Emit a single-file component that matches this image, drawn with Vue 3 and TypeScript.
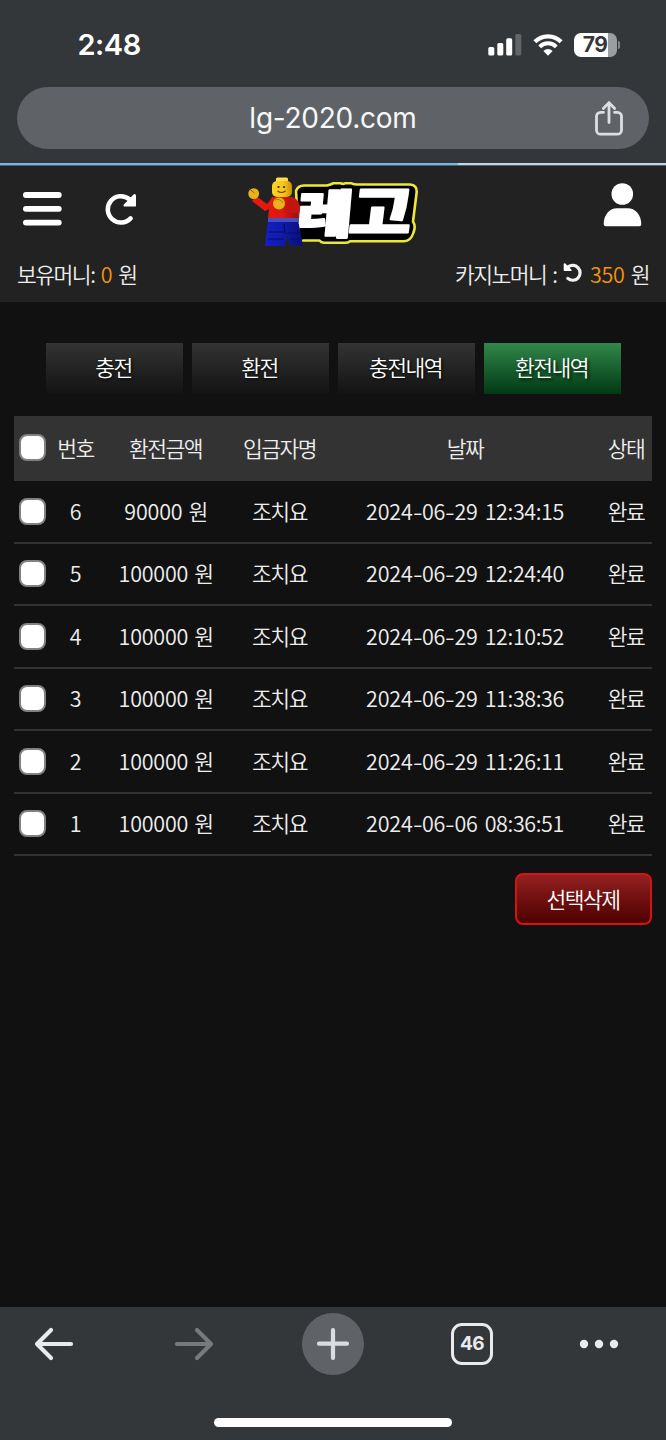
<script setup lang="ts">
import { ref, computed } from 'vue'

interface Withdrawal {
  id: number
  amount: string
  name: string
  date: string
  time: string
  status: string
}

const tabs: string[] = ['충전', '환전', '충전내역', '환전내역']
const activeTab = ref<number>(3)

const rows: Withdrawal[] = [
  { id: 6, amount: '90000', name: '조치요', date: '2024-06-29', time: '12:34:15', status: '완료' },
  { id: 5, amount: '100000', name: '조치요', date: '2024-06-29', time: '12:24:40', status: '완료' },
  { id: 4, amount: '100000', name: '조치요', date: '2024-06-29', time: '12:10:52', status: '완료' },
  { id: 3, amount: '100000', name: '조치요', date: '2024-06-29', time: '11:38:36', status: '완료' },
  { id: 2, amount: '100000', name: '조치요', date: '2024-06-29', time: '11:26:11', status: '완료' },
  { id: 1, amount: '100000', name: '조치요', date: '2024-06-06', time: '08:36:51', status: '완료' },
]

const dateParts = (date: string): string[] => date.split(/(-)/)

const selected = ref<number[]>([])
const allSelected = computed<boolean>({
  get: () => selected.value.length === rows.length,
  set: (on) => {
    selected.value = on ? rows.map((r) => r.id) : []
  },
})
</script>

<template>
  <div class="screen">
    <header class="chrome-top">
      <div class="status">
        <span class="time">2:48</span>
        <div class="indicators">
          <svg class="signal" width="34" height="22" viewBox="0 0 34 22">
            <rect x="0.3" y="13" width="6" height="8.5" rx="1.6" fill="#fff" />
            <rect x="9.3" y="9" width="6" height="12.5" rx="1.6" fill="#fff" />
            <rect x="18.2" y="4.3" width="6" height="17.2" rx="1.6" fill="#fff" />
            <rect x="27.3" y="0" width="6" height="21.5" rx="1.6" fill="#626466" />
          </svg>
          <svg class="wifi" width="30" height="22" viewBox="0 0 30 22">
            <path d="M1.9 7.7a18.6 18.6 0 0 1 26.2 0" fill="none" stroke="#fff" stroke-width="4.3" />
            <path d="M6.7 12.8a11.7 11.7 0 0 1 16.6 0" fill="none" stroke="#fff" stroke-width="4" />
            <path d="M10.4 17a6.4 6.4 0 0 1 9.2 0L15 21.7z" fill="#fff" />
          </svg>
          <div class="battery"><span>79</span></div>
          <i class="battery-tip"></i>
        </div>
      </div>
      <div class="address">
        <span class="url">lg-2020.com</span>
        <svg class="share" width="30" height="36" viewBox="0 0 30 36" fill="none" stroke="#dcdee3" stroke-width="2.8" stroke-linecap="round" stroke-linejoin="round">
          <path d="M9.5 12.3H6.5a4 4 0 0 0-4 4v13.9a4 4 0 0 0 4 4h17a4 4 0 0 0 4-4V16.3a4 4 0 0 0-4-4h-3" />
          <path d="M15 22.5V3M9.3 8.5L15 2.6l5.7 5.9" />
        </svg>
      </div>
    </header>
    <div class="progress"><i></i></div>

    <section class="site-head">
      <div class="nav">
        <svg class="menu" width="40" height="36" viewBox="0 0 40 36" stroke="#fff" stroke-width="5.8" stroke-linecap="round">
          <path d="M3.9 4h32.9M3.9 17.8h32.9M3.9 31.6h32.9" />
        </svg>
        <svg class="reload" width="34" height="34" viewBox="0 0 34 34">
          <path d="M26.6 26.4A13.2 13.2 0 1 1 25.4 7.2" fill="none" stroke="#fff" stroke-width="4.5" stroke-linecap="round" />
          <path d="M32 3.6v9.8q0 1.2-1.2 1.2H20.9q-2.2-.2-1-2.2l9.6-9.9q2.3-1.3 2.5 1.1z" fill="#fff" />
        </svg>
        <svg class="logo" width="176" height="76" viewBox="0 0 176 76">
          <defs>
            <linearGradient id="head" x1="0" x2="1"><stop offset="0" stop-color="#ffd21f" /><stop offset=".6" stop-color="#f6c51b" /><stop offset="1" stop-color="#c88f08" /></linearGradient>
            <linearGradient id="legs" x1="0" x2="1"><stop offset="0" stop-color="#1420c4" /><stop offset=".5" stop-color="#101aa8" /><stop offset="1" stop-color="#0a0e78" /></linearGradient>
            <linearGradient id="shirt" x1="0" x2="1"><stop offset="0" stop-color="#e81a12" /><stop offset=".65" stop-color="#dc1810" /><stop offset="1" stop-color="#9e0d0b" /></linearGradient>
          </defs>
          <path
            d="M49 16Q51 10.5 57 10.5H80Q84 9.5 86 8.3H94Q96 9.5 98 8.3H104.5Q107 9.5 110 9.5H163Q170 10 169.7 17L166 46.500Q169 51.500 166.5 57.500Q164 66 157 66.2H103Q101 67.8 98 67.8H77Q74 67.5 72.5 65.5H52Z"
            fill="#000"
            stroke="#ece936"
            stroke-width="2.6"
            stroke-linejoin="round"
          />
          <g class="word" fill="#fff" stroke="#fff" stroke-width="2.2" stroke-linejoin="round">
            <text transform="translate(48.500 57.500) skewX(-5) scale(1.170 .99)" font-size="52">레</text>
            <text transform="translate(100.500 58.300) skewX(-7) scale(1.130 .94)" font-size="60">고</text>
          </g>
          <path d="M21 45h30l5 25.500H43l-3-10-2 10.5H18z" fill="url(#legs)" />
          <path d="M37 49l1 10M22 57h15M40 58h14M21 64h16M43 64h13" stroke="#070c66" stroke-width="1.2" fill="none" />
          <path d="M21 43h31v4H21z" fill="#4450c0" />
          <path d="M25 22q-2 4-5 7l-11-8-4 5 13 10 4-2-1 9h31l-1-15q-3-7-9-6z" fill="url(#shirt)" />
          <path d="M42 22q9 0 11 9 1 6-4 7l-12-1v-5l7-1z" fill="#c51510" />
          <circle cx="6.7" cy="18.600" r="5.4" fill="#e8b31a" /><path d="M2.5 14l5 4" stroke="#8b650b" stroke-width="1" />
          <circle cx="32" cy="28.500" r="6" fill="#e8b31a" /><path d="M28 25q5-2 8 3" stroke="#a97a0c" stroke-width="1" fill="none" />
          <rect x="29" y="2.5" width="12" height="5" rx="1.6" fill="#ffdc50" />
          <rect x="25" y="6" width="20" height="16" rx="5" fill="url(#head)" />
          <circle cx="31.5" cy="12" r="1.1" fill="#332500" /><circle cx="37" cy="12" r="1.1" fill="#332500" />
          <path d="M30.5 16q4 3 8 0" fill="none" stroke="#654500" stroke-width="1.1" />
        </svg>
        <svg class="user" width="39" height="44" viewBox="0 0 39 44" fill="#fff">
          <circle cx="19.3" cy="11" r="10.8" />
          <path d="M.7 41.2c0-9.8 6.3-16 13.2-16h11c7 0 13.4 6.2 13.4 16q0 2-2 2H2.7q-2 0-2-2z" />
        </svg>
      </div>
      <div class="money">
        <p>보유머니<span class="num">:</span><b class="num own">0</b>원</p>
        <p>
          카지노머니<span class="num colon">:</span>
          <svg class="undo" width="20" height="20" viewBox="0 0 20 20">
            <path d="M5 4.1A7.4 7.4 0 1 1 4.8 15.4" fill="none" stroke="#f2f2f2" stroke-width="3.2" stroke-linecap="round" />
            <path d="M.7 1v6.3q0 .8.8.8h6.4q1.4-.2.5-1.3L2.3.6Q.8-.3.7 1z" fill="#fff" />
          </svg>
          <b class="num casino">350</b>원
        </p>
      </div>
    </section>

    <main>
      <nav class="tabs">
        <button v-for="(t, i) in tabs" :key="t" :class="{ on: i === activeTab }" @click="activeTab = i">{{ t }}</button>
      </nav>
      <div class="table">
        <div class="row head">
          <input v-model="allSelected" type="checkbox" />
          <span>번호</span><span>환전금액</span><span>입금자명</span><span>날짜</span><span>상태</span>
        </div>
        <div v-for="r in rows" :key="r.id" class="row">
          <input v-model="selected" type="checkbox" :value="r.id" />
          <span class="num">{{ r.id }}</span>
          <span><span class="num amount">{{ r.amount }}</span>원</span>
          <span>{{ r.name }}</span>
          <span class="num stamp"><span v-for="(p, i) in dateParts(r.date)" :key="i" :class="{ dash: p === '-' }">{{ p }}</span><span class="clock">{{ r.time }}</span></span>
          <span>{{ r.status }}</span>
        </div>
      </div>
      <button class="delete">선택삭제</button>
    </main>

    <footer class="chrome-bottom">
      <div class="tools">
        <svg width="40" height="34" viewBox="0 0 40 34" fill="none" stroke="#e8eaed" stroke-width="4.2" stroke-linecap="round" stroke-linejoin="round"><path d="M37 17H3M17 3L3 17l14 14" /></svg>
        <svg width="40" height="34" viewBox="0 0 40 34" fill="none" stroke="#77797b" stroke-width="4.2" stroke-linecap="round" stroke-linejoin="round"><path d="M3 17h34M23 3l14 14-14 14" /></svg>
        <div class="plus">
          <svg width="34" height="34" viewBox="0 0 34 34" stroke="#dadce0" stroke-width="4.2" stroke-linecap="round"><path d="M3 16.700h28M17 3v28" /></svg>
        </div>
        <div class="count">46</div>
        <svg width="40" height="34" viewBox="0 0 40 34" fill="#e8eaed"><circle cx="5" cy="17" r="4.2" /><circle cx="20" cy="17" r="4.2" /><circle cx="35" cy="17" r="4.2" /></svg>
      </div>
      <i class="home"></i>
    </footer>
  </div>
</template>

<style>
body {
  background: #111;
}
</style>

<style scoped>
.screen {
  width: 666px;
  height: 1440px;
  display: flex;
  flex-direction: column;
  overflow: hidden;
  background: #111;
  color: #eee;
  font-family: 'Noto Sans CJK KR', sans-serif;
  font-weight: 350;
  font-size: 21.5px;
  letter-spacing: -1.5px;
}
.screen * {
  box-sizing: border-box;
}
.chrome-top {
  height: 163px;
  background: #343739;
  flex: none;
  letter-spacing: 0;
}
.status {
  height: 87px;
  padding: 2px 46px 0 77.5px;
  display: flex;
  align-items: center;
  justify-content: space-between;
}
.time {
  font: 600 29px/34px Inter, sans-serif;
  letter-spacing: -0.5px;
  color: #fff;
}
.indicators {
  display: flex;
  align-items: center;
}
.wifi {
  margin: 0 11px 0 11px;
}
.battery {
  width: 43px;
  height: 24px;
  border-radius: 7px;
  background: linear-gradient(90deg, #fff 79%, #9b9d9e 79%);
  text-align: center;
}
.battery span {
  display: block;
  font: 700 21px/24px Inter, sans-serif;
  letter-spacing: -0.5px;
  color: #343739;
}
.battery-tip {
  width: 2.5px;
  height: 8px;
  margin-left: 1px;
  border-radius: 0 4px 4px 0;
  background: #85878a;
}
.address {
  width: 632px;
  height: 62px;
  margin: 0 auto;
  padding: 0 25px 0 0;
  border-radius: 31px;
  background: #5f6367;
  display: grid;
  grid-template-columns: 55px 1fr 30px;
  align-items: center;
}
.url {
  grid-column: 2;
  text-align: center;
  font: 400 28px/40px Inter, sans-serif;
  letter-spacing: -0.25px;
  color: #f7f8f9;
}
.progress {
  height: 3px;
  flex: none;
  background: #c3d5e4;
  border-bottom: 1px solid #426475;
}
.progress i {
  display: block;
  width: 458px;
  height: 2px;
  background: #7fb2dc;
}
.site-head {
  height: 136px;
  flex: none;
  background: #222;
}
.nav {
  height: 87px;
  display: flex;
  align-items: flex-start;
  padding: 10px 24px 0 22px;
}
.menu {
  margin-top: 15px;
}
.reload {
  margin: 16px 0 0 42px;
}
.logo {
  margin: -1px 0 0 109px;
  overflow: visible;
}
.word {
  font-family: 'Noto Sans CJK KR', sans-serif;
  font-weight: 900;
  letter-spacing: 0;
}
.user {
  margin: 7px 0 0 auto;
}
.money {
  display: flex;
  justify-content: space-between;
  padding: 5px 17px 0 17px;
}
.money p {
  margin: 0;
  line-height: 32px;
  display: flex;
  align-items: center;
}
.num {
  letter-spacing: -0.2px;
  font-weight: 350;
}
b.num {
  color: #f29410;
}
.own {
  margin: 0 6px 0 5px;
}
.colon {
  margin-left: 6px;
}
.casino {
  margin-right: 6px;
}
.undo {
  margin: -3px 7px 0 5px;
}
.amount {
  margin-right: 6px;
}
.dash {
  display: inline-block;
  margin: 0 1.1px;
  transform: scaleX(1.3);
}
.clock {
  margin-left: 7px;
  letter-spacing: -0.4px;
}
main {
  flex: 1;
  padding: 41px 14px 0;
  display: flex;
  flex-direction: column;
}
.tabs {
  display: flex;
  gap: 9px;
  width: 576px;
  margin: 0 0 22px 31.5px;
}
button {
  font: inherit;
  letter-spacing: inherit;
  padding: 0 1px 4px 0;
  color: #fff;
  border: 0;
}
.tabs button {
  width: 137px;
  height: 51px;
  background: linear-gradient(#333, #131313);
  text-shadow: 1px 1px 3px #000;
}
.tabs .on {
  background: linear-gradient(#31874a, #013914);
  text-shadow: 2px 2px 3px rgba(0, 0, 0, 0.7);
}
.row {
  display: grid;
  grid-template-columns: 37px 49px 131px 97px 274px 48px;
  align-items: center;
  justify-items: center;
  height: 62.5px;
  border-bottom: 2px solid #333;
  white-space: pre;
}
.row > span {
  margin-top: -2px;
}
.row.head > span {
  margin-top: 0;
}
.row.head {
  height: 65px;
  background: #333;
}
input {
  appearance: none;
  width: 27px;
  height: 27px;
  margin: 0;
  border: 2px solid #818184;
  border-radius: 8px;
  background: #fff;
}
input:checked {
  background: #31874a;
}
.delete {
  align-self: flex-end;
  width: 137px;
  height: 52px;
  margin-top: 17px;
  padding-bottom: 2px;
  border: 2px solid #d31414;
  border-radius: 8px;
  background: linear-gradient(#942020, #4e0000);
}
.chrome-bottom {
  height: 133px;
  flex: none;
  background: #343739;
  display: flex;
  flex-direction: column;
  align-items: center;
  letter-spacing: 0;
}
.tools {
  width: 100%;
  height: 74px;
  display: grid;
  grid-template-columns: 108px 172px 106px 172px 82px;
  align-items: center;
  justify-items: center;
}
.plus {
  width: 62px;
  height: 62px;
  border-radius: 50%;
  background: #5f6367;
  display: grid;
  place-items: center;
}
.count {
  width: 42px;
  height: 42px;
  border: 3.5px solid #e8eaed;
  border-radius: 11px;
  font: 700 19px/36px Inter, sans-serif;
  letter-spacing: -0.5px;
  text-align: center;
  color: #e8eaed;
}
.home {
  width: 238px;
  height: 9px;
  margin-top: 37px;
  border-radius: 5px;
  background: #fff;
}
</style>
